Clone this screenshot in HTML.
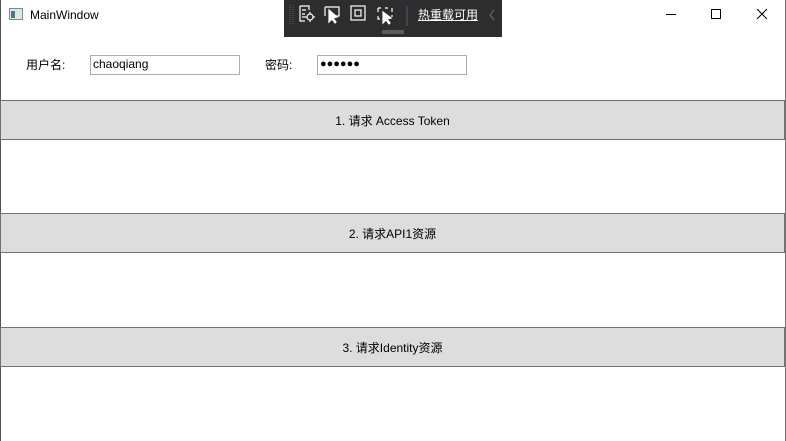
<!DOCTYPE html>
<html><head><meta charset="utf-8"><style>
body{margin:0;width:786px;height:441px;background:#fff;position:relative;overflow:hidden;font-family:"Liberation Sans","Noto Sans CJK SC",sans-serif;font-size:12px;color:#000}
.a{position:absolute}
.btn{position:absolute;left:0;width:783px;height:38px;background:#dddddd;border:1px solid #707070;text-align:center;line-height:40px;font-size:12px}
.inp{position:absolute;height:18px;border:1px solid #abadb3;box-sizing:border-box;line-height:16px;padding-left:2px;font-size:12px}
</style></head><body>
<div class="a" style="left:0;top:0;width:1px;height:441px;background:#555"></div>
<div class="a" style="right:0;top:0;width:1px;height:441px;background:#777"></div>
<svg class="a" style="left:9px;top:8px" width="14" height="12"><rect x="0.5" y="0.5" width="13" height="11" fill="#dfe6e8" stroke="#7a8a90"/><rect x="2" y="3" width="4" height="7" fill="#4a7a8a"/></svg>
<div class="a" style="left:30px;top:8px;font-size:12px">MainWindow</div>
<div class="a" style="left:284px;top:0;width:218px;height:37px;background:#2d2d30"></div>
<svg class="a" style="left:284px;top:0" width="218" height="37" fill="none" stroke="#fff" stroke-width="1.2">
<path d="M6 5v20M9 5v20" stroke="#555" stroke-dasharray="1 1"/>
<path d="M16 6h9v4M16 6v15h5M18 10h4M18 14h3M18 17h3"/><circle cx="26" cy="17" r="3"/><path d="M26 12v2M26 20v2M21 17h2M29 17h2"/>
<path d="M41 7h14v9h-4M41 7v9"/><path d="M45 10l0 12l3-3l3 4l1-1l-3-4l4-1z" fill="#fff"/>
<rect x="67" y="6" width="14" height="14"/><rect x="71" y="10" width="6" height="6"/>
<path d="M94 8h3M101 8h3M108 8v4M94 8v4M94 16v3h2M108 15v2"/><path d="M99 12l0 11l3-3l3 4l1-1l-3-4l4-1z" fill="#fff"/>
<path d="M123 6v20" stroke="#555"/>
<path d="M98 31h22M98 33h22" stroke="#777"/>
<path d="M210 10l-4 5l4 5" stroke="#666"/>
</svg>
<div class="a" style="left:418px;top:6px;color:#fff;font-size:12px;text-decoration:underline">热重载可用</div>
<svg class="a" style="left:660px;top:6px" width="120" height="16" stroke="#000" fill="none" stroke-width="1">
<path d="M6 8.5h10"/><rect x="51.5" y="3.5" width="9" height="9"/><path d="M97 3l10 10M107 3l-10 10"/>
</svg>
<div class="a" style="left:26px;top:56px">用户名:</div>
<div class="inp" style="left:90px;top:55px;width:150px;height:20px">chaoqiang</div>
<div class="a" style="left:265px;top:56px">密码:</div>
<div class="inp" style="left:317px;top:55px;width:150px;height:20px;font-size:11px;letter-spacing:0">●●●●●●</div>
<div class="btn" style="top:100px">1. 请求 Access Token</div>
<div class="btn" style="top:213px">2. 请求API1资源</div>
<div class="btn" style="top:327px">3. 请求Identity资源</div>
</body></html>
